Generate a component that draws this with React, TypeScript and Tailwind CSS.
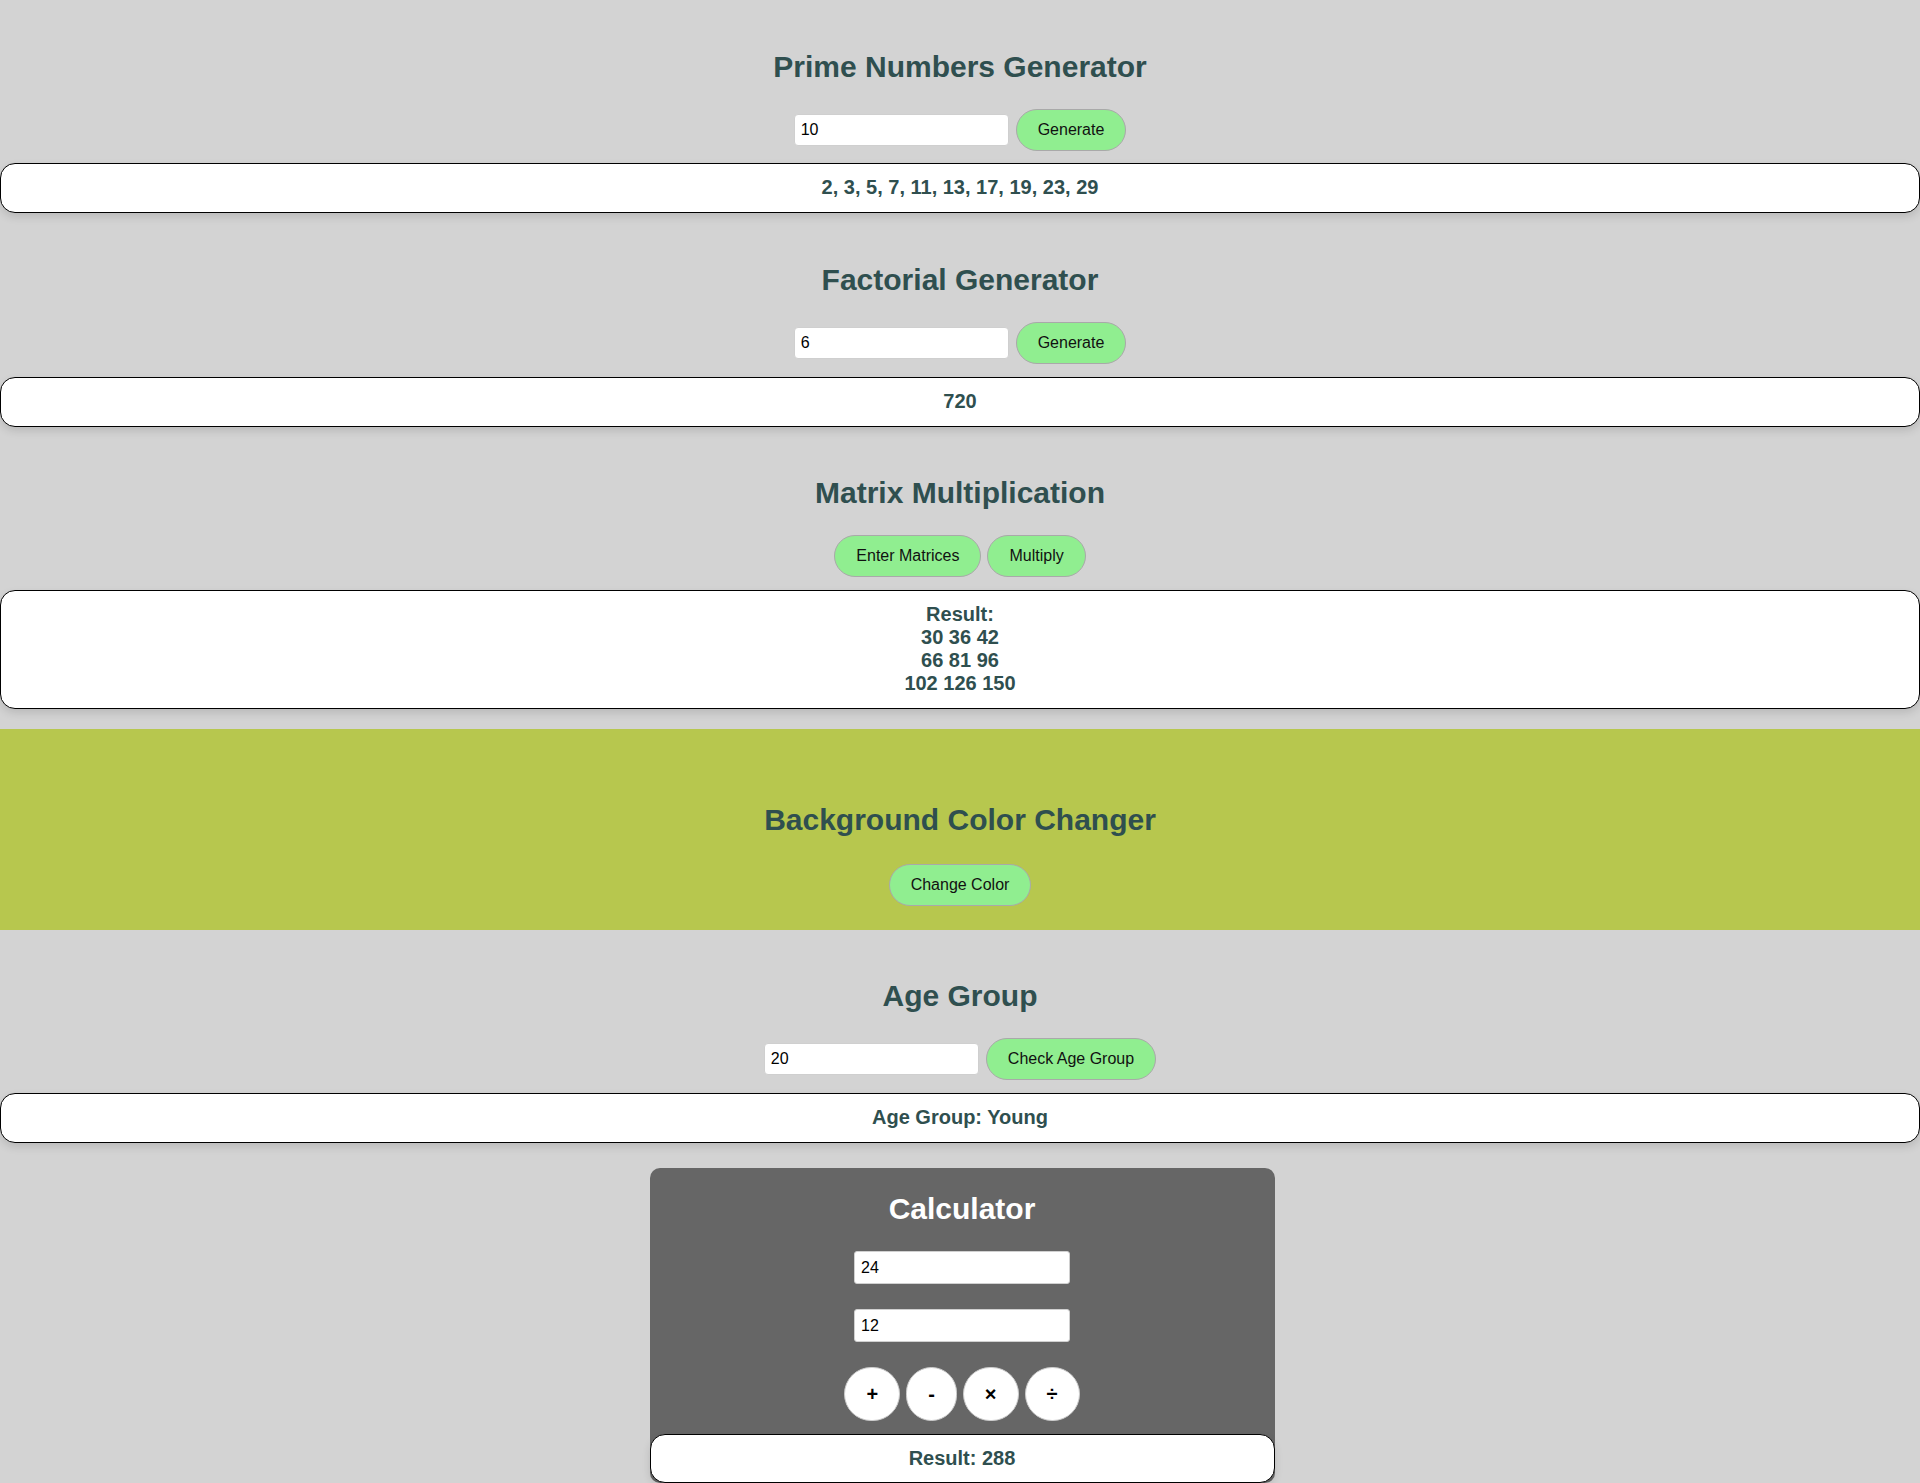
import React from "react";

const titleCls =
  "text-center text-[30px] font-bold leading-[34px] text-[#2f4f4f]";
const inputCls =
  "w-[215px] h-[32px] bg-white rounded-[4px] border border-[#cfcfcf] px-[6px] text-[16px] text-black outline-none font-[family-name:Liberation_Sans,Arial,sans-serif]";
const btnCls =
  "h-[42px] px-[21px] rounded-full bg-[#90ee90] border border-[#a9a9a9] text-[16px] text-[#111] leading-[18px] font-[family-name:Liberation_Sans,Arial,sans-serif]";
const boxCls =
  "w-full bg-white border border-black rounded-[15px] pt-[12px] pb-[13px] text-center text-[20px] font-bold leading-[23px] text-[#2f4f4f] shadow-[0_4px_8px_rgba(0,0,0,0.12)]";

export default function App() {
  return (
    <div className="min-h-[1483px] bg-[#d3d3d3] font-[family-name:Liberation_Sans,Arial,sans-serif] flex flex-col">
      {/* Prime */}
      <div className="pt-[50px] flex flex-col">
        <h2 className={titleCls}>Prime Numbers Generator</h2>
        <div className="mt-[25px] flex justify-center items-center gap-[7px]">
          <input className={inputCls} defaultValue="10" />
          <button className={btnCls}>Generate</button>
        </div>
        <div className={"mt-[12px] " + boxCls}>2, 3, 5, 7, 11, 13, 17, 19, 23, 29</div>
      </div>

      {/* Factorial */}
      <div className="mt-[50px] flex flex-col">
        <h2 className={titleCls}>Factorial Generator</h2>
        <div className="mt-[25px] flex justify-center items-center gap-[7px]">
          <input className={inputCls} defaultValue="6" />
          <button className={btnCls}>Generate</button>
        </div>
        <div className={"mt-[13px] " + boxCls}>720</div>
      </div>

      {/* Matrix */}
      <div className="mt-[49px] flex flex-col">
        <h2 className={titleCls}>Matrix Multiplication</h2>
        <div className="mt-[25px] flex justify-center items-center gap-[6px]">
          <button className={btnCls}>Enter Matrices</button>
          <button className={btnCls}>Multiply</button>
        </div>
        <div className={"mt-[13px] " + boxCls}>
          <div>Result:</div>
          <div>30 36 42</div>
          <div>66 81 96</div>
          <div>102 126 150</div>
        </div>
      </div>

      {/* Background color band */}
      <div className="mt-[20px] bg-[#b7c74e] pt-[74px] pb-[24px] flex flex-col items-center">
        <h2 className={titleCls}>Background Color Changer</h2>
        <button className={"mt-[27px] " + btnCls}>Change Color</button>
      </div>

      {/* Age Group */}
      <div className="mt-[49px] flex flex-col">
        <h2 className={titleCls}>Age Group</h2>
        <div className="mt-[25px] flex justify-center items-center gap-[7px]">
          <input className={inputCls} defaultValue="20" />
          <button className={btnCls}>Check Age Group</button>
        </div>
        <div className={"mt-[13px] " + boxCls}>Age Group: Young</div>
      </div>

      {/* Calculator */}
      <div className="mt-[25px] mx-auto w-[625px] translate-x-[2px] bg-[#666666] rounded-[10px] pt-[24px] flex flex-col items-center">
        <h2 className="text-center text-[30px] font-bold leading-[34px] text-white">Calculator</h2>
        <input
          className="mt-[25px] w-[216px] h-[33px] bg-white rounded-[3px] border border-[#d0d0d0] px-[6px] text-[16px] text-black outline-none font-[family-name:Liberation_Sans,Arial,sans-serif]"
          defaultValue="24"
        />
        <input
          className="mt-[25px] w-[216px] h-[33px] bg-white rounded-[3px] border border-[#d0d0d0] px-[6px] text-[16px] text-black outline-none font-[family-name:Liberation_Sans,Arial,sans-serif]"
          defaultValue="12"
        />
        <div className="mt-[25px] flex justify-center items-center gap-[6px]">
          {["+", "-", "×", "÷"].map((op) => (
            <button
              key={op}
              className="h-[54px] min-w-[49px] px-[21px] rounded-full bg-white border border-[#cccccc] text-[20px] font-bold text-black leading-[23px] font-[family-name:Liberation_Sans,Arial,sans-serif]"
            >
              {op}
            </button>
          ))}
        </div>
        <div className="mt-[13px] w-full bg-white border border-black rounded-[15px] pt-[12px] pb-[12px] text-center text-[20px] font-bold leading-[23px] text-[#2f4f4f] shadow-[0_4px_8px_rgba(0,0,0,0.12)]">
          Result: 288
        </div>
      </div>
    </div>
  );
}
